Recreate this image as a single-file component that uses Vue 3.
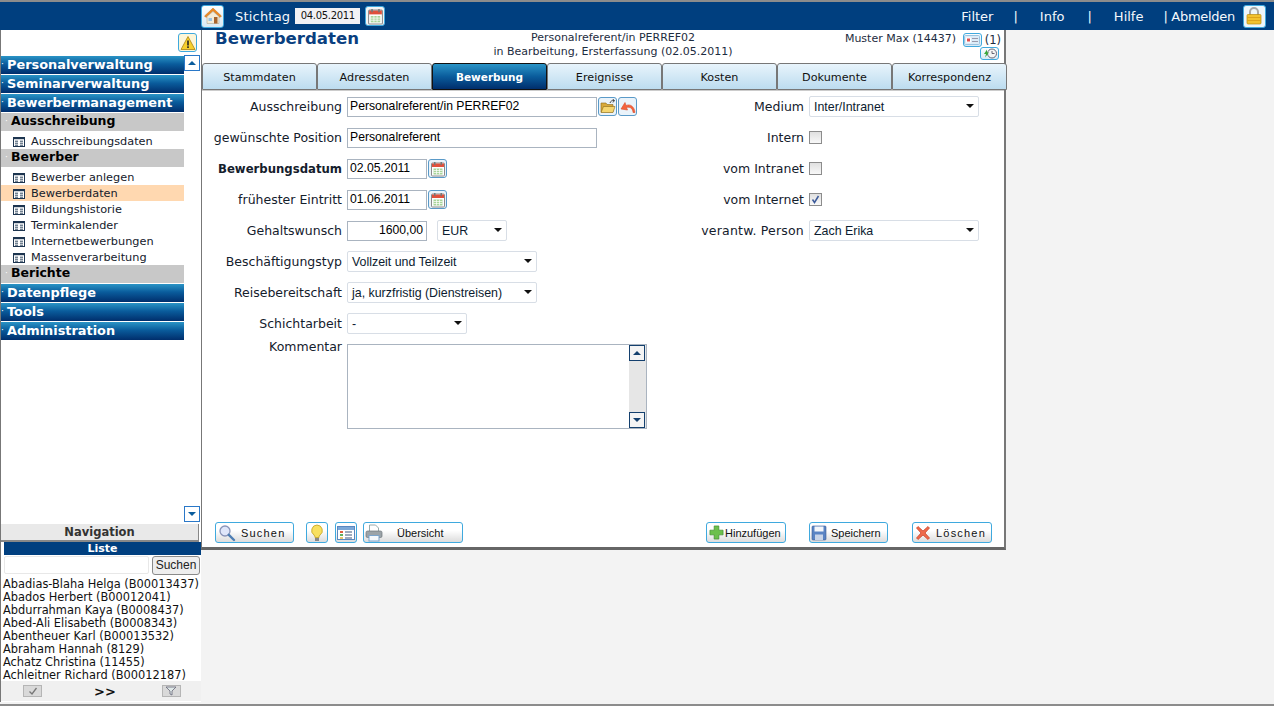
<script setup>
const menuTop = [
  { t: 'Personalverwaltung', k: 'main' },
  { t: 'Seminarverwaltung', k: 'main' },
  { t: 'Bewerbermanagement', k: 'main' },
  { t: 'Ausschreibung', k: 'sub' },
  { t: 'Ausschreibungsdaten', k: 'leaf' },
  { t: 'Bewerber', k: 'sub' },
  { t: 'Bewerber anlegen', k: 'leaf' },
  { t: 'Bewerberdaten', k: 'leaf', on: true },
  { t: 'Bildungshistorie', k: 'leaf' },
  { t: 'Terminkalender', k: 'leaf' },
  { t: 'Internetbewerbungen', k: 'leaf' },
  { t: 'Massenverarbeitung', k: 'leaf' },
  { t: 'Berichte', k: 'sub' },
  { t: 'Datenpflege', k: 'main', gap: true },
  { t: 'Tools', k: 'main' },
  { t: 'Administration', k: 'main' }
]
const names = [
  'Abadias-Blaha Helga (B00013437)',
  'Abados Herbert (B00012041)',
  'Abdurrahman Kaya (B0008437)',
  'Abed-Ali Elisabeth (B0008343)',
  'Abentheuer Karl (B00013532)',
  'Abraham Hannah (8129)',
  'Achatz Christina (11455)',
  'Achleitner Richard (B00012187)'
]
const tabs = ['Stammdaten', 'Adressdaten', 'Bewerbung', 'Ereignisse', 'Kosten', 'Dokumente', 'Korrespondenz']
</script>

<template>
  <div class="page">
    <svg class="defs" width="0" height="0">
      <symbol id="cal" viewBox="0 0 16 16">
        <rect x="1.5" y="2" width="13" height="13" rx="1" fill="#fff" stroke="#8a8a8a" />
        <rect x="2" y="2.5" width="12" height="3.5" fill="#e0503c" />
        <rect x="4" y="1" width="1.5" height="3" fill="#777" />
        <rect x="10.5" y="1" width="1.5" height="3" fill="#777" />
        <rect x="3.5" y="7.5" width="9" height="6" fill="#a8d49a" />
        <path d="M3.5 9.5h9M3.5 11.5h9M6.5 7.5v6M9.5 7.5v6" stroke="#fff" stroke-width=".7" />
      </symbol>
      <symbol id="tbl" viewBox="0 0 12 12">
        <rect x=".5" y="1.5" width="11" height="9" fill="#fff" stroke="#1d3550" />
        <rect x="1" y="2" width="10" height="1.2" fill="#1d3550" />
        <path d="M2 5.200h3M7 5.200h3M2 7.200h3M7 7.200h3M2 9.200h3M7 9.200h3" stroke="#1d3550" stroke-width=".9" />
      </symbol>
    </svg>

    <header class="topbar">
      <button class="icon-btn home-btn">
        <svg viewBox="0 0 20 20" width="20" height="20">
          <path d="M1.5 10 10 2l8.500 8-1.500 1.500L10 5 3 11.500z" fill="#ee8a22" stroke="#b85f10" stroke-width=".4" />
          <path d="M4 10.500 10 5.500l6 5v7H4z" fill="#f4ecd8" stroke="#a89a80" stroke-width=".5" />
          <rect x="11" y="11" width="3.500" height="6.500" fill="#a8642c" />
          <rect x="5.500" y="12" width="3.500" height="3" fill="#9cc4e4" />
        </svg>
      </button>
      <span class="stichtag">Stichtag</span>
      <span class="datebox">04.05.2011</span>
      <button class="icon-btn cal-top"><svg width="17" height="17"><use href="#cal" /></svg></button>
      <nav class="topnav">
        <span class="n1">Filter</span><span class="n2">|</span><span class="n3">Info</span><span class="n4">|</span><span class="n5">Hilfe</span><span class="n6">| Abmelden</span>
      </nav>
      <button class="icon-btn lock-btn">
        <svg viewBox="0 0 20 20" width="20" height="20">
          <path d="M6 9V6a4 4 0 0 1 8 0v3" fill="none" stroke="#a8a8a8" stroke-width="2" />
          <rect x="3" y="8.500" width="14" height="9.500" rx="1" fill="#f2c230" stroke="#b88a10" stroke-width=".7" />
          <path d="M3.500 11.500h13M3.500 14.500h13" stroke="#d89c18" stroke-width=".8" />
        </svg>
      </button>
    </header>

    <div class="main">
      <aside class="side">
        <div class="navzone">
          <div class="warn-row">
            <button class="icon-btn warn-btn">
              <svg viewBox="0 0 16 16" width="16" height="16">
                <path d="M8 1.500 15 14.500H1z" fill="#f6cf2e" stroke="#a98310" stroke-width=".8" />
                <rect x="7.200" y="5.500" width="1.600" height="5" fill="#222" />
                <rect x="7.200" y="11.300" width="1.600" height="1.700" fill="#222" />
              </svg>
            </button>
          </div>
          <div class="navbody">
            <ul class="menu">
              <li
                v-for="m in menuTop"
                :key="m.t"
                :class="[m.k, { on: m.on, gap: m.gap }]"
              >
                <svg v-if="m.k === 'leaf'" class="leaf-ico" width="12" height="12"><use href="#tbl" /></svg>
                <span v-else class="dot">·</span>
                <span>{{ m.t }}</span>
              </li>
            </ul>
            <div class="scroller">
              <span class="sbtn"><i class="up"></i></span>
              <span class="sbtn"><i class="down"></i></span>
            </div>
          </div>
        </div>
        <div class="navlabel">Navigation</div>
        <div class="listzone">
          <div class="listhead">Liste</div>
          <div class="searchrow">
            <span class="searchbox"></span>
            <button class="searchbtn">Suchen</button>
          </div>
          <div class="names">
            <div v-for="n in names" :key="n">{{ n }}</div>
          </div>
          <div class="listfoot">
            <span class="mini">
              <svg viewBox="0 0 12 10" width="12" height="10"><path d="M2.500 5.500 5 8l4.500-6" fill="none" stroke="#777" stroke-width="1.300" /></svg>
            </span>
            <b class="more">&gt;&gt;</b>
            <span class="mini">
              <svg viewBox="0 0 12 10" width="12" height="10"><path d="M1 1h10L7 5v4L5 8V5z" fill="#dfe8e8" stroke="#667" stroke-width=".8" /></svg>
            </span>
          </div>
        </div>
      </aside>

      <section class="panel">
        <div class="head">
          <h1>Bewerberdaten</h1>
          <div class="headmid">
            <div>Personalreferent/in PERREF02</div>
            <div>in Bearbeitung, Ersterfassung (02.05.2011)</div>
          </div>
          <div class="headright">
            <span class="person">Muster Max (14437)</span>
            <div class="headicons">
              <div class="cardrow">
                <button class="icon-btn card-btn">
                  <svg viewBox="0 0 16 10" width="16" height="10">
                    <rect x=".5" y=".5" width="15" height="9" rx="1" fill="#dcecf8" stroke="#9cc4e0" />
                    <rect x="2.500" y="3" width="4" height="4" fill="#e05050" stroke="#fff" />
                    <path d="M8 3.500h6M8 6.500h6" stroke="#99a" />
                  </svg>
                </button>
                <span>(1)</span>
              </div>
              <button class="icon-btn clock-btn">
                <svg viewBox="0 0 16 11" width="16" height="11">
                  <circle cx="10" cy="5.500" r="4.500" fill="#f4f4f4" stroke="#667" />
                  <path d="M10 3v2.500h2.500" fill="none" stroke="#445" stroke-width=".8" />
                  <path d="M5 1.500 2 6h2L3 9.500 7 4.500H5z" fill="#3aa83a" />
                </svg>
              </button>
            </div>
          </div>
        </div>

        <div class="tabs">
          <div v-for="t in tabs" :key="t" class="tab" :class="{ active: t === 'Bewerbung' }">{{ t }}</div>
        </div>

        <div class="form">
          <div class="col-left">
            <label>Ausschreibung</label>
            <div class="ctl">
              <span class="input w250">Personalreferent/in PERREF02</span>
              <button class="icon-btn small-btn first">
                <svg viewBox="0 0 16 16" width="16" height="16">
                  <path d="M1 4h5l1 1.500h6V13H1z" fill="#d8a93a" stroke="#8a6a18" stroke-width=".6" />
                  <path d="M3.500 7.500H15L13 13.500H1z" fill="#f5d670" stroke="#8a6a18" stroke-width=".6" />
                  <path d="M10 4c.5-2 2-2.500 4-2.500M12.500 0l2 1.500-1.500 2" fill="none" stroke="#333" stroke-width=".9" />
                </svg>
              </button>
              <button class="icon-btn small-btn">
                <svg viewBox="0 0 16 16" width="16" height="16">
                  <path d="M15 13.500C14.500 8 10.500 4.500 6 6.500L5 3.500 1 10l6.500 1-1-2.500C10 7.500 13 9.500 13 13.500z" fill="#f4623c" stroke="#d84a28" stroke-width=".6" />
                </svg>
              </button>
            </div>

            <label>gewünschte Position</label>
            <div class="ctl"><span class="input w250">Personalreferent</span></div>

            <label class="strong">Bewerbungsdatum</label>
            <div class="ctl">
              <span class="input w80">02.05.2011</span>
              <button class="icon-btn small-btn cal-btn"><svg width="16" height="16"><use href="#cal" /></svg></button>
            </div>

            <label>frühester Eintritt</label>
            <div class="ctl">
              <span class="input w80">01.06.2011</span>
              <button class="icon-btn small-btn cal-btn"><svg width="16" height="16"><use href="#cal" /></svg></button>
            </div>

            <label>Gehaltswunsch</label>
            <div class="ctl">
              <span class="input w80 right">1600,00</span>
              <span class="select w70">EUR<i class="arrow"></i></span>
            </div>

            <label>Beschäftigungstyp</label>
            <div class="ctl"><span class="select w190">Vollzeit und Teilzeit<i class="arrow"></i></span></div>

            <label>Reisebereitschaft</label>
            <div class="ctl"><span class="select w190">ja, kurzfristig (Dienstreisen)<i class="arrow"></i></span></div>

            <label>Schichtarbeit</label>
            <div class="ctl"><span class="select w120">-<i class="arrow"></i></span></div>

            <label class="top">Kommentar</label>
            <div class="comment">
              <div class="comment-bar">
                <span class="tbtn"><i class="up"></i></span>
                <span class="tbtn"><i class="down"></i></span>
              </div>
            </div>
          </div>

          <div class="col-right">
            <label>Medium</label>
            <div class="ctl"><span class="select w170">Inter/Intranet<i class="arrow"></i></span></div>
            <label>Intern</label>
            <div class="ctl"><span class="check"></span></div>
            <label>vom Intranet</label>
            <div class="ctl"><span class="check"></span></div>
            <label>vom Internet</label>
            <div class="ctl">
              <span class="check">
                <svg viewBox="0 0 11 11" width="11" height="11"><path d="M2.500 5.500 4.500 8.500 8.500 2" fill="none" stroke="#3c5a9a" stroke-width="1.500" /></svg>
              </span>
            </div>
            <label class="wide">verantw. Person</label>
            <div class="ctl"><span class="select w170">Zach Erika<i class="arrow"></i></span></div>
          </div>
        </div>

        <div class="toolbar">
          <button class="btn b-search spaced">
            <svg viewBox="0 0 18 18" width="18" height="18">
              <circle cx="7" cy="7" r="5" fill="#dfe6fa" stroke="#8a94b8" stroke-width="1.300" />
              <path d="M10.800 10.800 16 16" stroke="#4e7eb4" stroke-width="2.400" stroke-linecap="round" />
            </svg>
            <span>Suchen</span>
          </button>
          <button class="btn b-sq b-bulb">
            <svg viewBox="0 0 16 18" width="16" height="18">
              <path d="M8 1a5.500 5.500 0 0 0-3 10c.8.7 1 1.500 1 2.500h4c0-1 .2-1.800 1-2.500A5.500 5.500 0 0 0 8 1z" fill="#f8e060" stroke="#c0a020" stroke-width=".8" />
              <rect x="6" y="14" width="4" height="3" fill="#888" />
            </svg>
          </button>
          <button class="btn b-sq b-tbl">
            <svg viewBox="0 0 18 16" width="18" height="16">
              <rect x=".5" y="1.500" width="17" height="13" fill="#fff" stroke="#5a88c0" />
              <rect x="1" y="2" width="16" height="3" fill="#7ca8d8" />
              <path d="M3 7h3" stroke="#e06040" stroke-width="2" />
              <path d="M3 10h3" stroke="#60b060" stroke-width="2" />
              <path d="M3 13h3" stroke="#e0b040" stroke-width="1.500" />
              <path d="M8 7h7M8 10h7M8 13h7" stroke="#8090a8" stroke-width="1.500" />
            </svg>
          </button>
          <button class="btn b-print">
            <svg viewBox="0 0 18 18" width="18" height="18">
              <path d="M4.500 1h6l3 3v4h-9z" fill="#fff" stroke="#9aa" />
              <rect x="1" y="7" width="16" height="6.500" rx="1.500" fill="#9ba3a8" stroke="#6a7278" stroke-width=".7" />
              <rect x="4" y="11.500" width="10" height="5.500" fill="#f4f8fc" stroke="#7ba4cc" />
            </svg>
            <span>Übersicht</span>
          </button>
          <button class="btn b-add">
            <svg viewBox="0 0 16 16" width="15" height="15">
              <path d="M5.500 1h5v4.500H15v5h-4.500V15h-5v-4.500H1v-5h4.500z" fill="#6cc04c" stroke="#3a8a2a" stroke-width=".7" />
            </svg>
            <span>Hinzufügen</span>
          </button>
          <button class="btn b-save">
            <svg viewBox="0 0 16 16" width="16" height="16">
              <rect x="1" y="1" width="14" height="14" rx="1" fill="#5a84c4" stroke="#3a5a94" stroke-width=".6" />
              <rect x="3.500" y="1.500" width="9" height="5" fill="#f4f6fa" />
              <rect x="4" y="9.500" width="8" height="5.500" fill="#c8d4e8" />
            </svg>
            <span>Speichern</span>
          </button>
          <button class="btn b-del spaced">
            <svg viewBox="0 0 16 16" width="16" height="16">
              <path d="M1.500 3 3 1.500 8 6l5-4.500L14.500 3 10 8l4.500 5-1.500 1.500L8 10l-5 4.500L1.500 13 6 8z" fill="#ee6a4c" stroke="#c63a20" stroke-width=".7" />
            </svg>
            <span>Löschen</span>
          </button>
        </div>
      </section>
    </div>
  </div>
</template>

<style>
html, body { margin: 0; padding: 0; background: #f3f3f3; overflow: hidden; }
</style>

<style scoped>
.page {
  width: 1274px;
  height: 706px;
  box-sizing: border-box;
  border-top: 2px solid #8c8c8c;
  border-bottom: 2px solid #8c8c8c;
  background: #f3f3f3;
  display: flex;
  flex-direction: column;
  font-family: "DejaVu Sans", Verdana, sans-serif;
  color: #111;
  overflow: hidden;
}
.defs { display: block; height: 0; width: 0; }
button { padding: 0; font: inherit; cursor: default; }
ul { margin: 0; padding: 0; list-style: none; }
.icon-btn {
  display: inline-flex;
  align-items: center;
  justify-content: center;
  box-sizing: border-box;
  border: 1px solid #3fa9de;
  border-radius: 3px;
  background: linear-gradient(#fdfefe, #d7e9f5);
}

/* top bar */
.topbar {
  height: 28px;
  flex: none;
  background: #003f7f;
  display: flex;
  align-items: center;
  color: #f4f8fc;
  font-size: 13px;
  padding-left: 201px;
}
.home-btn { width: 23px; height: 23px; border-width: 1.500px; }
.stichtag { margin-left: 11px; letter-spacing: .2px; }
.datebox {
  margin-left: 5px;
  width: 65px;
  height: 16px;
  line-height: 16px;
  text-align: center;
  background: #f1f1f4;
  color: #111;
  font-size: 10px;
  letter-spacing: -.3px;
}
.cal-top { width: 20px; height: 20px; margin-left: 5px; background: #f4f4f4; }
.topnav { display: flex; margin-left: 576px; }
.topnav span { display: block; white-space: nowrap; }
.n2 { margin-left: 20px; }
.n3 { margin-left: 22px; }
.n4 { margin-left: 23px; }
.n5 { margin-left: 22px; }
.n6 { margin-left: 20px; letter-spacing: -.3px; }
.lock-btn { width: 23px; height: 23px; margin-left: 8px; border-width: 1.500px; background: #eef6fb; }

.main { flex: 1; display: flex; align-items: flex-start; min-height: 0; }

/* sidebar */
.side {
  width: 201px;
  height: 672px;
  flex: none;
  box-sizing: border-box;
  border-left: 1px solid #777;
  display: flex;
  flex-direction: column;
  background: #fff;
}
.navzone { height: 494px; flex: none; display: flex; flex-direction: column; }
.warn-row { height: 25px; display: flex; justify-content: flex-end; padding: 3px 4px 0 0; box-sizing: border-box; }
.warn-btn { width: 19px; height: 19px; background: #fdf6d8; }
.navbody { flex: 1; display: flex; min-height: 0; }
.menu { width: 183px; flex: none; padding-top: 1px; }
.menu li { display: flex; align-items: center; white-space: nowrap; box-sizing: border-box; }
.dot { width: 6px; flex: none; font-size: 9px; color: #fff; text-align: left; font-weight: 400; }
.menu .main {
  height: 18px;
  margin-bottom: 1px;
  padding-bottom: 2px;
  background: linear-gradient(#2a94c6 0%, #0a5c9c 45%, #002e6c 100%);
  color: #fff;
  font-weight: 700;
  font-size: 12.900px;
  flex: none;
}
.menu .gap { margin-top: 1px; }
.menu .sub {
  height: 18px;
  background: #c8c8c8;
  color: #000;
  font-weight: 700;
  font-size: 12.500px;
  padding: 0 0 3px 4px;
  margin-bottom: 1px;
}
.menu .sub .dot { width: 6px; }
.menu .leaf {
  height: 16px;
  font-size: 11.300px;
  padding: 1px 0 0 12px;
  color: #14202c;
}
.menu .sub + .leaf { height: 17px; padding-top: 2px; }
.menu .leaf.on { background: #ffd8b0; }
.leaf-ico { margin-right: 6px; flex: none; }
.scroller {
  width: 17px;
  flex: none;
  display: flex;
  flex-direction: column;
  justify-content: space-between;
  padding-bottom: 2px;
  box-sizing: border-box;
  height: 469px;
}
.sbtn {
  width: 16px;
  height: 16px;
  box-sizing: border-box;
  border: 1px solid #2a78c8;
  display: flex;
  align-items: center;
  justify-content: center;
  background: #fff;
}
.up, .down { display: block; width: 0; height: 0; border-left: 4px solid transparent; border-right: 4px solid transparent; }
.up { border-bottom: 4px solid #0a5c9c; }
.down { border-top: 4px solid #0a5c9c; }

.navlabel {
  height: 18px;
  box-sizing: border-box;
  width: 198px;
  flex: none;
  background: #e9e9e9;
  border-right: 1px solid #888;
  border-bottom: 2px solid #888;
  text-align: center;
  font-size: 11.500px;
  font-weight: 700;
  color: #333;
  line-height: 17px;
}
.listzone { flex: 1; display: flex; flex-direction: column; min-height: 0; background: #fff; }
.listhead {
  margin-left: 3px;
  height: 13px;
  line-height: 13px;
  background: #003f7f;
  color: #fff;
  font-size: 11px;
  font-weight: 700;
  text-align: center;
  flex: none;
  width: 197px;
}
.searchrow { display: flex; align-items: center; height: 20px; margin-left: 3px; width: 197px; flex: none; gap: 3px; background: #fff; }
.searchbox { width: 145px; height: 18px; box-sizing: border-box; background: #fff; border: 1px solid #e8e8e8; border-radius: 2px; }
.searchbtn {
  width: 48px;
  height: 19px;
  border: 1px solid #8a8a8a;
  border-radius: 3px;
  background: #eeeeee;
  font-family: "Liberation Sans", sans-serif;
  font-size: 12px;
  color: #222;
}
.names {
  padding: 3px 0 0 2px;
  font-size: 11.400px;
  line-height: 13px;
  color: #111;
  flex: none;
  white-space: nowrap;
  height: 106px;
  box-sizing: border-box;
}
.listfoot {
  width: 200px;
  height: 20px;
  background: #f0f0f0;
  flex: none;
  display: flex;
  align-items: center;
  justify-content: space-between;
  padding: 0 20px 0 22px;
  box-sizing: border-box;
}
.mini {
  width: 19px;
  height: 12px;
  background: #d9d9d9;
  border: 1px solid #b5b5b5;
  display: flex;
  align-items: center;
  justify-content: center;
  box-sizing: border-box;
}
.more { font-size: 13px; margin-left: 6px; color: #111; }

/* panel */
.panel {
  width: 805px;
  height: 520px;
  flex: none;
  box-sizing: border-box;
  background: #fff;
  border-left: 1px solid #777;
  border-right: 2px solid #777;
  border-bottom: 3px solid #666;
  display: flex;
  flex-direction: column;
}
.head { height: 33px; flex: none; display: flex; color: #1d2c40; font-size: 11px; }
h1 {
  margin: 0;
  width: 262px;
  box-sizing: border-box;
  padding: 0 0 0 13px;
  font-size: 16.600px;
  line-height: 17px;
  color: #0a3f80;
  font-weight: 700;
  white-space: nowrap;
}
.headmid { width: 298px; text-align: center; line-height: 14px; padding-top: 1px; white-space: nowrap; }
.headright { flex: 1; display: flex; justify-content: flex-end; padding-right: 3px; }
.person { white-space: nowrap; line-height: 17px; }
.headicons { margin-left: 7px; width: 38px; display: flex; flex-direction: column; align-items: flex-end; padding-top: 3px; }
.cardrow { display: flex; align-items: center; gap: 3px; height: 14px; line-height: 14px; font-size: 11.500px; }
.card-btn { width: 19px; height: 14px; }
.clock-btn { width: 19px; height: 13px; margin-top: 0; margin-right: 2px; }

.tabs { display: flex; height: 27px; flex: none; border-bottom: 1px solid #ccc; }
.tab {
  width: 115px;
  flex: none;
  box-sizing: border-box;
  height: 27px;
  padding-top: 1px;
  border: 1px solid #777;
  border-radius: 3px 3px 0 0;
  background: linear-gradient(#e8f4fc, #bcdcef);
  font-size: 11.200px;
  color: #111;
  display: flex;
  align-items: center;
  justify-content: center;
  white-space: nowrap;
}
.tab.active {
  background: linear-gradient(#2a94c6, #0a5c9c 50%, #002e6c);
  color: #fff;
  border-color: #111;
  font-weight: 700;
  font-size: 10.500px;
}

.form { display: flex; flex: 1; min-height: 0; }
.col-left {
  width: 487px;
  flex: none;
  display: grid;
  grid-template-columns: 140px 1fr;
  column-gap: 5px;
  grid-auto-rows: 31px;
  align-content: start;
}
.col-right {
  flex: 1;
  display: grid;
  grid-template-columns: 115px 1fr;
  column-gap: 5px;
  grid-auto-rows: 31px;
  align-content: start;
}
label { text-align: right; font-size: 12.500px; line-height: 32px; white-space: nowrap; color: #14202c; }
label.strong { font-weight: 700; font-size: 11.700px; }
label.top { line-height: 14px; margin-top: 1px; }
label.wide { letter-spacing: .2px; }
.ctl { display: flex; align-items: center; }
.input {
  display: block;
  height: 20px;
  box-sizing: border-box;
  border: 1px solid #aab4c0;
  font-family: "Liberation Sans", Arial, sans-serif;
  font-size: 12.200px;
  line-height: 17px;
  padding: 0 2px;
  color: #000;
  background: #fff;
  white-space: nowrap;
}
.w250 { width: 250px; }
.w80 { width: 80px; }
.right { text-align: right; padding-right: 3px; }
.select {
  display: flex;
  align-items: center;
  position: relative;
  height: 21px;
  box-sizing: border-box;
  border: 1px solid #d8dee6;
  border-radius: 2px;
  font-family: "Liberation Sans", Arial, sans-serif;
  font-size: 12.400px;
  padding-left: 4px;
  color: #0c1c30;
  background: #fff;
  white-space: nowrap;
}
.w70 { width: 70px; margin-left: 10px; }
.w190 { width: 190px; }
.w120 { width: 120px; }
.w170 { width: 170px; }
.arrow {
  position: absolute;
  right: 4px;
  top: 7px;
  width: 0;
  height: 0;
  border-left: 4px solid transparent;
  border-right: 4px solid transparent;
  border-top: 4px solid #111;
}
.small-btn { width: 19px; height: 19px; background: #eaf3fa; border-color: #5a9ac8; }
.first { margin-left: 1px; margin-right: 1px; }
.cal-btn { margin-left: 1px; }
.comment {
  width: 300px;
  height: 85px;
  margin-top: 5px;
  box-sizing: border-box;
  border: 1px solid #aab4c0;
  display: flex;
  justify-content: flex-end;
  background: #fff;
}
.comment-bar {
  width: 17px;
  background: #e6e6e6;
  display: flex;
  flex-direction: column;
  justify-content: space-between;
}
.tbtn {
  width: 16px;
  height: 16px;
  box-sizing: border-box;
  border: 1px solid #14406e;
  background: #f4f4f4;
  display: flex;
  align-items: center;
  justify-content: center;
}
.tbtn .up { border-bottom-color: #14406e; }
.tbtn .down { border-top-color: #14406e; }
.check {
  width: 13px;
  height: 13px;
  box-sizing: border-box;
  border: 1px solid #8c8c8c;
  background: linear-gradient(#e0e0e0, #f8f8f8);
  display: flex;
  align-items: center;
  justify-content: center;
}

.toolbar {
  height: 25px;
  flex: none;
  display: flex;
  align-items: flex-start;
}
.btn {
  height: 21px;
  box-sizing: border-box;
  border: 1px solid #3fa9de;
  border-radius: 3px;
  background: linear-gradient(#fff 40%, #dcdcdc);
  font-family: "Liberation Sans", Arial, sans-serif;
  font-size: 11px;
  color: #111;
  display: inline-flex;
  align-items: center;
  flex: none;
  white-space: nowrap;
}
.spaced { letter-spacing: 1.200px; }
.b-search { width: 79px; margin-left: 13px; padding-left: 2px; gap: 5px; }
.b-sq { width: 22px; justify-content: center; }
.b-bulb { margin-left: 12px; }
.b-tbl { margin-left: 7px; }
.b-print { width: 100px; margin-left: 6px; padding-left: 1px; gap: 14px; }
.b-add { width: 80px; margin-left: 243px; padding-left: 2px; gap: 1px; }
.b-save { width: 79px; margin-left: 23px; padding-left: 1px; gap: 4px; }
.b-del { width: 80px; margin-left: 24px; padding-left: 2px; gap: 5px; }
</style>
